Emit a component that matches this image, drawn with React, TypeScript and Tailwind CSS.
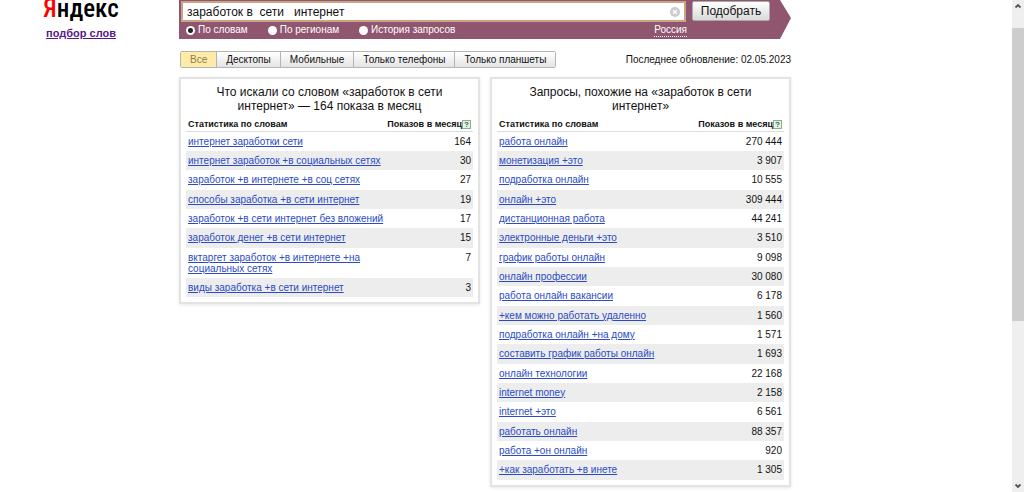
import { useState } from "react";

type Row = [string, string];

const searched: Row[] = [
  ["интернет заработки сети", "164"],
  ["интернет заработок +в социальных сетях", "30"],
  ["заработок +в интернете +в соц сетях", "27"],
  ["способы заработка +в сети интернет", "19"],
  ["заработок +в сети интернет без вложений", "17"],
  ["заработок денег +в сети интернет", "15"],
  ["вктаргет заработок +в интернете +на социальных сетях", "7"],
  ["виды заработка +в сети интернет", "3"],
];

const similar: Row[] = [
  ["работа онлайн", "270 444"],
  ["монетизация +это", "3 907"],
  ["подработка онлайн", "10 555"],
  ["онлайн +это", "309 444"],
  ["дистанционная работа", "44 241"],
  ["электронные деньги +это", "3 510"],
  ["график работы онлайн", "9 098"],
  ["онлайн профессии", "30 080"],
  ["работа онлайн вакансии", "6 178"],
  ["+кем можно работать удаленно", "1 560"],
  ["подработка онлайн +на дому", "1 571"],
  ["составить график работы онлайн", "1 693"],
  ["онлайн технологии", "22 168"],
  ["internet money", "2 158"],
  ["internet +это", "6 561"],
  ["работать онлайн", "88 357"],
  ["работа +он онлайн", "920"],
  ["+как заработать +в инете", "1 305"],
];

const tabs = ["Все", "Десктопы", "Мобильные", "Только телефоны", "Только планшеты"];
const modes = ["По словам", "По регионам", "История запросов"];

function HelpMark() {
  return (
    <svg viewBox="0 0 9 9" className="size-[9px] shrink-0" aria-label="Справка">
      <rect x="0.5" y="0.5" width="8" height="8" fill="#e6f0e6" stroke="#86b08c" />
      <path d="M3 3.4V2.6h3v1.7H4.6v1" fill="none" stroke="#3f8049" />
      <path d="M4.1 6h1v1h-1z" fill="#3f8049" />
    </svg>
  );
}

function Panel({ title, rows }: { title: string; rows: Row[] }) {
  return (
    <section className="min-w-0 flex-1 border-2 border-[#e3e3e3] bg-white px-[5px] pt-[6px] pb-[5px] shadow-[0_1px_3px_rgba(0,0,0,0.1)]">
      <h2 className="mx-auto w-[240px] text-center text-[12px] leading-[14px]">{title}</h2>
      <table className="mt-[5px] w-full border-collapse">
        <thead>
          <tr className="h-[13px] border-b border-[#dcdce8] text-[9px] leading-[11px] font-bold">
            <th className="px-[2px] text-left">Статистика по словам</th>
            <th className="px-[2px]">
              <span className="flex items-center justify-end whitespace-nowrap">
                Показов в месяц
                <HelpMark />
              </span>
            </th>
          </tr>
        </thead>
        <tbody className="[&>tr]:h-[19px] [&>tr:nth-child(3n)]:h-5">
          {rows.map(([phrase, count]) => (
            <tr key={phrase} className="align-top even:bg-[#ededed]">
              <td className="px-[2px] py-1 text-[10px] leading-[11px]">
                <a href="#" className="block w-fit max-w-[200px] text-[#2a4bc4] underline">
                  {phrase}
                </a>
              </td>
              <td className="px-[2px] py-1 text-right text-[10px] leading-[11px] whitespace-nowrap">{count}</td>
            </tr>
          ))}
        </tbody>
      </table>
    </section>
  );
}

export default function App() {
  const [query, setQuery] = useState("заработок в  сети   интернет");
  const [mode, setMode] = useState(0);
  const [tab, setTab] = useState(0);

  return (
    <div className="flex min-h-screen bg-white font-['Liberation_Sans',Arial,sans-serif] text-[#111]">
      <aside className="flex w-[179px] shrink-0 flex-col items-center pr-[17px]">
        <a
          href="#"
          className="-mt-1 block h-[30px] font-['Roboto_Condensed','Open_Sans',sans-serif] text-[25px] leading-[25px] font-medium text-black"
        >
          <span className="text-[#f00]">Я</span>ндекс
        </a>
        <a href="#" className="text-[11px] leading-[14px] font-bold text-[#551a8b] underline">
          подбор слов
        </a>
      </aside>

      <main className="w-[612px] max-w-full">
        <form
          onSubmit={(e) => e.preventDefault()}
          className="h-[39px] bg-[#91566f] pt-[1px] pl-[2px] [clip-path:polygon(0_0,calc(100%_-_11px)_0,100%_18px,calc(100%_-_11px)_100%,0_100%)]"
        >
          <div className="flex gap-[6px] pr-[21px]">
            <div className="flex h-[21px] flex-1 items-center border-2 border-[#c9a583] bg-white pr-1 pl-1">
              <input
                aria-label="Запрос"
                value={query}
                onChange={(e) => setQuery(e.target.value)}
                className="min-w-0 flex-1 text-[12px] leading-4 whitespace-pre outline-none"
              />
              <button type="button" aria-label="Очистить" onClick={() => setQuery("")}>
                <svg viewBox="0 0 10 10" className="size-[10px]">
                  <circle cx="5" cy="5" r="5" fill="#ccc" />
                  <path d="M3.2 3.2l3.6 3.6M6.8 3.2L3.2 6.8" stroke="#fff" strokeWidth="1.4" />
                </svg>
              </button>
            </div>
            <button
              type="submit"
              className="h-[20px] w-[78px] rounded-[2px] border border-[#aaa] bg-linear-to-b from-white to-[#d9d9d9] text-[12px] leading-4"
            >
              Подобрать
            </button>
          </div>
          <div className="flex items-center pt-[1px] pr-[104px] pl-[5px] text-[10px] leading-[14px] text-white">
            <fieldset className="flex gap-5">
              {modes.map((label, i) => (
                <label key={label} className="flex items-center gap-[3px]">
                  <input
                    type="radio"
                    name="mode"
                    checked={mode === i}
                    onChange={() => setMode(i)}
                    className="size-[9px] appearance-none rounded-full bg-white checked:bg-[radial-gradient(circle,#222_2px,#fff_3px)]"
                  />
                  {label}
                </label>
              ))}
            </fieldset>
            <a href="#" className="ml-auto border-b border-dotted border-white leading-[12px]">
              Россия
            </a>
          </div>
        </form>

        <div className="mt-3 flex items-center justify-between pl-[1px]">
          <div className="flex h-[17px] overflow-hidden rounded-[2px] border border-[#b5b5b5]">
            {tabs.map((label, i) => (
              <button
                key={label}
                type="button"
                aria-pressed={tab === i}
                onClick={() => setTab(i)}
                className="border-l border-[#b5b5b5] bg-linear-to-b from-white to-[#e4e4e4] px-[9px] text-[10px] leading-[15px] first:border-l-0 aria-pressed:bg-none aria-pressed:bg-[#ffeba8] aria-pressed:text-[#8c7d50]"
              >
                {label}
              </button>
            ))}
          </div>
          <p className="text-[10px] leading-[14px]">Последнее обновление: 02.05.2023</p>
        </div>

        <div className="mt-[9px] flex items-start gap-[10px] pb-[5px]">
          <Panel title="Что искали со словом «заработок в сети интернет» — 164 показа в месяц" rows={searched} />
          <Panel title="Запросы, похожие на «заработок в сети интернет»" rows={similar} />
        </div>
      </main>

      <div aria-hidden="true" className="ml-auto flex w-3 flex-col items-center bg-[#efefef]">
        <svg viewBox="0 0 12 12" className="mt-[1px] size-3">
          <path d="M3.5 6.5L6 4l2.5 2.5" fill="none" stroke="#555" strokeWidth="1.8" />
        </svg>
        <div className="mt-[15px] h-[293px] w-full bg-[#cdcdcd]" />
        <svg viewBox="0 0 12 12" className="mt-auto size-3">
          <path d="M3.5 4.5L6 7l2.5-2.5" fill="none" stroke="#555" strokeWidth="1.8" />
        </svg>
      </div>
    </div>
  );
}
